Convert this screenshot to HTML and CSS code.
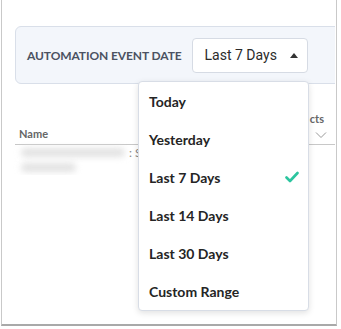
FILE: index.html
```html
<!DOCTYPE html>
<html lang="en">
<head>
    <meta charset="UTF-8">
    <title>Automation events</title>
    <link rel="stylesheet" href="styles.css">
</head>
<body>

    <div class="frame">
        <div class="viewport">
            <div class="filters">
                <span class="filter-label">AUTOMATION EVENT DATE</span>
                <div class="select">
                    <span>Last 7 Days</span>
                    <span class="caret"></span>
                </div>
            </div>

            <div class="table">
                <div class="table-head">
                    <div class="col-name">Name</div>
                    <div class="col-right">
                        <span>cts</span>
                        <svg width="12" height="8" viewBox="0 0 12 8"><path d="M1 1.5 L6 6.5 L11 1.5" fill="none" stroke="#999" stroke-width="1"/></svg>
                    </div>
                </div>
                <div class="row">
                    <div class="blur wide"></div>
                    <span class="row-text">: S</span>
                </div>
                <div class="row">
                    <div class="blur short"></div>
                </div>
            </div>
        </div>

        <ul class="menu">
            <li>Today</li>
            <li>Yesterday</li>
            <li class="selected">Last 7 Days
                <svg width="14" height="12" viewBox="0 0 14 12"><path d="M1.5 6.5 L5 10 L12.5 2" fill="none" stroke="#2cc59f" stroke-width="2.6" stroke-linecap="round" stroke-linejoin="round"/></svg>
            </li>
            <li>Last 14 Days</li>
            <li>Last 30 Days</li>
            <li>Custom Range</li>
        </ul>
    </div>

</body>
</html>
```

FILE: styles.css
```css
body {
    margin: 0;
    background: #ffffff;
    font-family: Lato, "Noto Sans", sans-serif;
}
.frame {
    position: relative;
    width: 334px;
    height: 324px;
    margin-left: 1px;
    border: 1px solid #c9c9c9;
    border-top: none;
    border-bottom: 2px solid #a9a9a9;
    background: #fff;
    overflow: hidden;
}
.viewport {
    width: 333px;
    padding: 26px 0 0 13px;
    box-sizing: border-box;
    overflow: hidden;
}
.filters {
    display: flex;
    align-items: center;
    height: 58px;
    width: 360px;
    box-sizing: border-box;
    padding-left: 11px;
    background: #f3f6fb;
    border: 1px solid #d9dfe9;
    border-radius: 6px;
}
.filter-label {
    font-size: 12px;
    font-weight: 700;
    color: #4b5262;
    letter-spacing: -0.1px;
}
.select {
    display: flex;
    align-items: center;
    justify-content: space-between;
    margin-left: 10px;
    width: 116px;
    height: 35px;
    box-sizing: border-box;
    padding: 0 9px 0 12px;
    background: #fff;
    border: 1px solid #d6dbe4;
    border-radius: 4px;
    font-family: Roboto, sans-serif;
    font-size: 14px;
    color: #2b2b2b;
}
.caret {
    width: 0;
    height: 0;
    border-left: 4.5px solid transparent;
    border-right: 4.5px solid transparent;
    border-bottom: 5px solid #333;
}
.table {
    margin-top: 20px;
}
.table-head {
    display: flex;
    justify-content: space-between;
    align-items: flex-end;
    height: 40px;
    border-bottom: 1px solid #c8c8c8;
}
.col-name {
    padding: 0 0 4px 4px;
    font-size: 11px;
    font-weight: 700;
    color: #666;
}
.col-right {
    display: flex;
    flex-direction: column;
    align-items: flex-end;
    gap: 5px;
    padding: 0 11px 5px 0;
    font-size: 11px;
    font-weight: 700;
    color: #666;
    line-height: 14px;
}
.col-right svg {
    margin-right: -3px;
}
.row {
    display: flex;
    align-items: center;
    height: 15px;
    padding-left: 6px;
}
.row:first-of-type {
    margin-top: 8px;
}
.blur {
    height: 9px;
    background: #e2e2e2;
    border-radius: 5px;
    filter: blur(3px);
}
.wide {
    width: 104px;
}
.short {
    width: 55px;
}
.row-text {
    margin-left: 4px;
    font-size: 12px;
    color: #888;
}
.menu {
    position: absolute;
    left: 136px;
    top: 81px;
    width: 169px;
    margin: 0;
    padding: 0;
    list-style: none;
    background: #fff;
    border: 1px solid #d8dde6;
    border-radius: 4px;
    box-shadow: 0 2px 6px rgba(0, 0, 0, 0.12);
}
.menu li {
    display: flex;
    align-items: center;
    justify-content: space-between;
    height: 38px;
    padding: 0 9px 0 10px;
    font-size: 14px;
    font-weight: 700;
    color: #252525;
}
```
